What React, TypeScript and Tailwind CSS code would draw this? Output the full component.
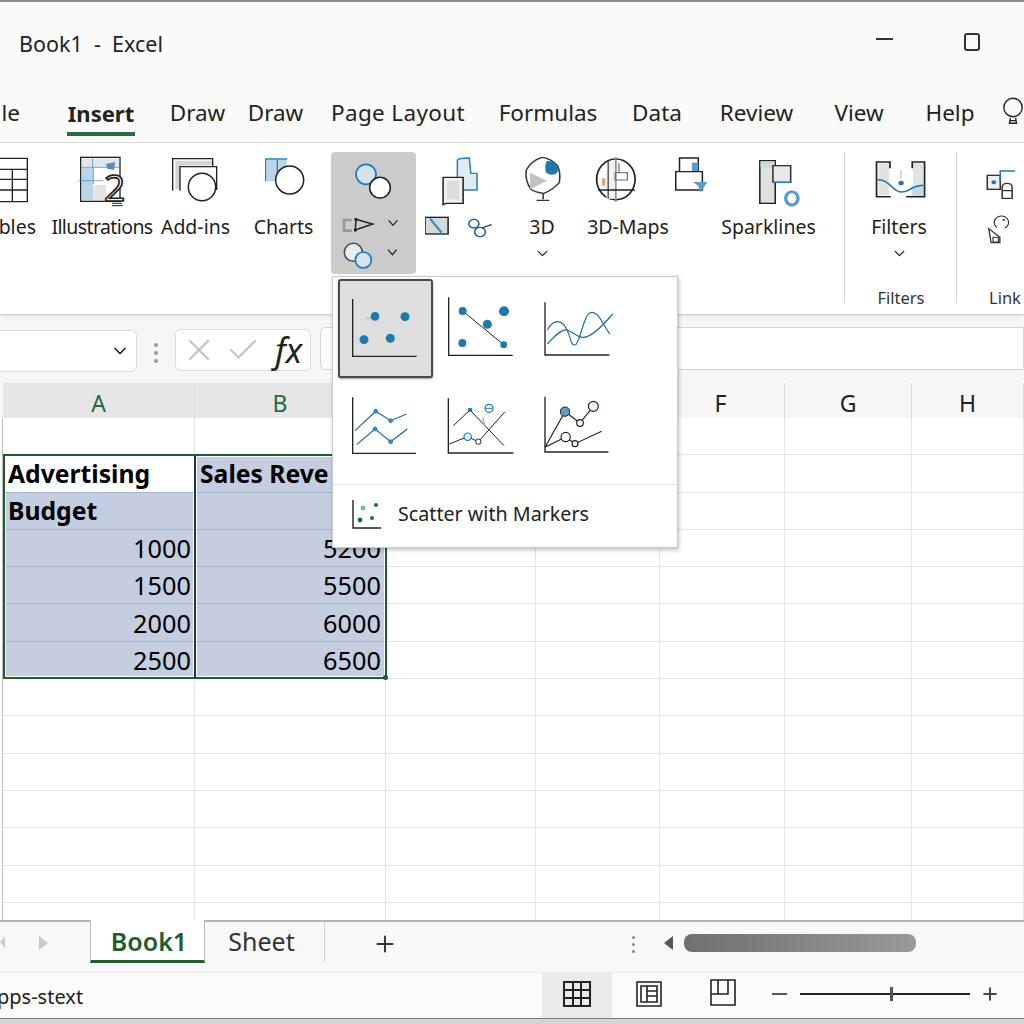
import { ChevronDown, Plus, X, Check } from 'lucide-react';

const tabs = [
  { label: 'Draw', cls: 'ml-[35px] w-[55px]' },
  { label: 'Draw', cls: 'ml-[23px] w-[55px]' },
  { label: 'Page Layout', cls: 'ml-[28px] w-[134px] tracking-[0.35px]' },
  { label: 'Formulas', cls: 'ml-[34px] w-[98px]' },
  { label: 'Data', cls: 'ml-[35px] w-[50px]' },
  { label: 'Review', cls: 'ml-[37px] w-[75px]' },
  { label: 'View', cls: 'ml-[39px] w-[52px]' },
  { label: 'Help', cls: 'ml-[40px] w-[50px]' },
];

const colLetters = [
  { letter: 'A', cls: 'bg-[#e6e6e6] text-[#1e6b3a] border-b-2 border-[#1d5c2f]' },
  { letter: 'B', cls: 'bg-[#e6e6e6] text-[#1e6b3a] border-b-2 border-[#1d5c2f] pr-[20px]' },
  { letter: 'C', cls: 'text-[#333] border-b-2 border-[#b5b5b5]' },
  { letter: 'D', cls: 'text-[#333] border-b-2 border-[#b5b5b5]' },
  { letter: 'F', cls: 'text-[#222] border-b-2 border-[#b5b5b5] pr-[3px]' },
  { letter: 'G', cls: 'text-[#222] border-b-2 border-[#b5b5b5]' },
  { letter: 'H', cls: 'text-[#222] border-b-2 border-[#b5b5b5]' },
];

const dataRows = [
  { a: '', b: '', top: true },
  { a: 'Advertising', b: 'Sales Reve', bold: true, plainA: true },
  { a: 'Budget', b: '', bold: true },
  { a: '1000', b: '5200' },
  { a: '1500', b: '5500' },
  { a: '2000', b: '6000' },
  { a: '2500', b: '6500' },
];

const ink = '#222';
const blue = '#1f77ad';

function TablesIcon() {
  return (
    <svg width="44" height="60" viewBox="0 36 132 180" fill="none" stroke={ink} strokeWidth="4">
      <path d="M-5 55H82V185H-5M-5 88H82M-5 118H82M-5 150H82M37 88V185" />
    </svg>
  );
}

function IllustrationsIcon() {
  return (
    <svg width="116" height="60" viewBox="132 36 348 180" fill="none">
      <rect x="246" y="84" width="34" height="96" fill="#b9d5e6" />
      <rect x="246" y="56" width="110" height="26" fill="#dfe5ea" />
      <rect x="282" y="135" width="36" height="45" fill="#e4e4e4" />
      <rect x="242" y="52" width="118" height="132" stroke={ink} strokeWidth="4" />
      <path d="M278 52V82M242 82H360M236 122H310M280 82V132" stroke="#3b84b5" strokeWidth="2" />
      <path d="M318 72L345 66L342 90L322 86Z" fill="#5b8fb5" />
      <text x="312" y="184" fontSize="112" fontFamily="Open Sans" fill="#fff" stroke={ink} strokeWidth="5">2</text>
      <path d="M336 190H366M336 197H368" stroke="#33556b" strokeWidth="4" />
    </svg>
  );
}

function AddinsIcon() {
  return (
    <svg width="71" height="60" viewBox="480 36 213 180" fill="none">
      <path d="M526 62H636V76H540V148H526Z" fill="#d5d5d5" />
      <path d="M518 152V56H638V80" stroke={ink} strokeWidth="4" />
      <path d="M540 152V80H650V150" stroke={ink} strokeWidth="4" />
      <circle cx="606" cy="141" r="41" fill="#fff" stroke={ink} strokeWidth="4.5" />
    </svg>
  );
}

function ChartsIcon() {
  return (
    <svg width="67" height="60" viewBox="750 36 201 180" fill="none">
      <path d="M800 60H860V100L830 124H800Z" fill="#b9d5e6" />
      <path d="M797 124V57H862M832 60V110" stroke="#2a80b9" strokeWidth="4" />
      <circle cx="869" cy="120" r="42" fill="#fff" stroke={ink} strokeWidth="4.5" />
    </svg>
  );
}

function ShapesIcon() {
  return (
    <svg width="85" height="122" viewBox="993 36 255 366" fill="none">
      <circle cx="1098" cy="103" r="30" fill="#d6e2ec" stroke="#1a78c2" strokeWidth="5" />
      <circle cx="1140" cy="143" r="31" fill="#fff" stroke={ink} strokeWidth="4.5" />
      <path d="M1056 240H1032V272H1056" stroke="#999" strokeWidth="8" />
      <path d="M1068 238L1118 252L1066 270Z" stroke={ink} strokeWidth="4.5" />
      <circle cx="1068" cy="238" r="5" fill={ink} />
      <circle cx="1066" cy="270" r="5" fill={ink} />
      <path d="M1166 241L1179 256L1192 241" stroke={ink} strokeWidth="4" />
      <circle cx="1060" cy="337" r="27" fill="#e6ecf1" stroke="#3c4a55" strokeWidth="4.5" />
      <circle cx="1090" cy="360" r="24" fill="#d6e2ec" stroke="#1a78c2" strokeWidth="5" />
      <path d="M1164 329L1177 344L1190 329" stroke={ink} strokeWidth="4" />
    </svg>
  );
}

function ModelsIcon() {
  return (
    <svg width="67" height="122" viewBox="13 36 174 366" preserveAspectRatio="none" fill="none">
      <path d="M97 112V62Q97 54 128 54L132 100H148V150H100Z" fill="#e2ebf1" stroke="#2a80b9" strokeWidth="4" />
      <path d="M60 112H112V190H68L60 194Z" fill="#f1f1f1" stroke={ink} strokeWidth="4" />
      <rect x="70" y="122" width="32" height="56" fill="#dcdcdc" />
      <rect x="13" y="232" width="60" height="50" fill="#d3dade" stroke={ink} strokeWidth="4" />
      <path d="M26 236L56 278" stroke="#3f8dc0" strokeWidth="6" />
      <circle cx="140" cy="251" r="13" stroke="#1f5f8b" strokeWidth="4" />
      <circle cx="156" cy="276" r="14" stroke="#1f5f8b" strokeWidth="4" />
      <path d="M160 264L186 254" stroke="#333" strokeWidth="4" />
    </svg>
  );
}

function ThreeDIcon() {
  return (
    <svg width="60" height="60" viewBox="239 36 156 180" preserveAspectRatio="none" fill="none">
      <path d="M316 52Q340 54 358 78Q366 100 362 128Q345 150 322 160Q300 158 288 148Q272 120 276 90Q290 62 316 52Z" fill="#fff" stroke="#333" strokeWidth="4" strokeLinejoin="round" />
      <path d="M330 62Q350 62 360 84Q360 96 352 102Q338 108 328 98Q322 78 330 62Z" fill={blue} />
      <path d="M286 98L330 122L286 148Z" fill="#c2c2c2" />
      <path d="M320 162V178M303 181H336" stroke="#333" strokeWidth="4" />
    </svg>
  );
}

function MapsIcon() {
  return (
    <svg width="82" height="60" viewBox="433 36 213 180" preserveAspectRatio="none" fill="none">
      <ellipse cx="508" cy="118" rx="50" ry="61" fill="#fff" stroke={ink} strokeWidth="4.5" />
      <path d="M480 118Q484 70 508 58V176H484Z" fill="#f0f0f0" />
      <path d="M508 52V186" stroke="#888" strokeWidth="4" />
      <path d="M488 60V175" stroke="#333" strokeWidth="3" />
      <rect x="506" y="98" width="32" height="22" stroke="#666" strokeWidth="3" />
      <path d="M516 70V98" stroke="#666" strokeWidth="3" />
      <path d="M462 150H557" stroke={ink} strokeWidth="4" />
      <rect x="472" y="115" width="8" height="22" fill="#e9a07a" />
    </svg>
  );
}

function TourIcon() {
  return (
    <svg width="33" height="60" viewBox="660 36 88 180" preserveAspectRatio="none" fill="none">
      <path d="M672 95V54H722V95" stroke={ink} strokeWidth="4" />
      <rect x="705" y="68" width="17" height="27" fill="#5b9bc9" />
      <path d="M662 95H733V150H662Z" fill="#fff" stroke={ink} strokeWidth="4" />
      <path d="M708 126H746L728 158L722 138Z" fill="#5b9bc9" />
    </svg>
  );
}

function SparklinesIcon() {
  return (
    <svg width="93" height="60" viewBox="784 36 241 180" preserveAspectRatio="none" fill="none">
      <rect x="882" y="62" width="40" height="128" fill="#e0e0e0" stroke={ink} strokeWidth="4" />
      <path d="M884 64H920V82H884Z" fill="#c6d9e6" />
      <rect x="916" y="77" width="46" height="50" fill="#e8e8e8" stroke="#333" strokeWidth="4" />
      <path d="M916 127H962" stroke="#2a80b9" strokeWidth="4" />
      <ellipse cx="965" cy="175" rx="16" ry="20" fill="#fff" stroke="#5b9bc9" strokeWidth="9" />
    </svg>
  );
}

function FiltersIcon() {
  return (
    <svg width="58" height="60" viewBox="1168 36 151 180" preserveAspectRatio="none" fill="none">
      <rect x="1190" y="70" width="28" height="96" fill="#e2e2e2" />
      <rect x="1280" y="70" width="26" height="70" fill="#e2e2e2" />
      <rect x="1278" y="138" width="28" height="30" fill="#c3d9e8" />
      <path d="M1220 85V66H1185V170H1222M1278 85V66H1310V170H1262" stroke={ink} strokeWidth="4.5" />
      <path d="M1185 120C1220 115 1225 156 1250 156S1270 136 1312 136" stroke={blue} strokeWidth="4.5" />
      <circle cx="1249" cy="129" r="7" fill={blue} />
      <path d="M1249 90V116" stroke="#bbb" strokeWidth="3" />
    </svg>
  );
}

function LinkIcon() {
  return (
    <svg width="67" height="122" viewBox="1393 36 175 366" preserveAspectRatio="none" fill="none">
      <rect x="1472" y="106" width="34" height="42" fill="#eee" stroke="#333" strokeWidth="4" />
      <circle cx="1489" cy="127" r="6" fill={blue} />
      <path d="M1506 125V93H1545" stroke={blue} strokeWidth="4" />
      <path d="M1511 175V142Q1511 130 1524 130Q1537 130 1537 142V175ZM1511 152H1537" fill="#fff" stroke="#333" strokeWidth="4" />
      <path d="M1497 262A19 19 0 1 1 1518 264" stroke="#333" strokeWidth="3" />
      <circle cx="1515" cy="240" r="3" fill="#333" />
      <path d="M1476 266L1505 292V308H1482Z" fill="#fff" stroke="#333" strokeWidth="3.5" />
      <rect x="1487" y="292" width="14" height="14" stroke="#333" strokeWidth="3" />
    </svg>
  );
}

function Axis({ d }: { d: string }) {
  return <path d={d} stroke="#222" strokeWidth="4" fill="none" />;
}

function ScatterThumb({ kind }: { kind: number }) {
  return (
    <svg width="96" height="99" viewBox="0 0 288 297" fill="none" className="shrink-0">
      {kind === 0 && (
        <>
          <Axis d="M44 60V232H236" />
          <path d="M84 118H108" stroke="#999" strokeWidth="2" />
          <circle cx="111" cy="112" r="13" fill={blue} />
          <circle cx="201" cy="113" r="13.5" fill={blue} />
          <circle cx="78" cy="182" r="13.5" fill={blue} />
          <circle cx="157" cy="178" r="13.5" fill={blue} />
        </>
      )}
      {kind === 1 && (
        <>
          <Axis d="M44 55V229H236" />
          <path d="M86 96L209 197" stroke="#222" strokeWidth="3" />
          <circle cx="86" cy="96" r="12" fill={blue} />
          <circle cx="210" cy="97" r="15" fill={blue} />
          <circle cx="160" cy="136" r="13.5" fill={blue} />
          <circle cx="85" cy="192" r="12" fill={blue} />
          <circle cx="209" cy="197" r="10" fill={blue} />
        </>
      )}
      {kind === 2 && (
        <>
          <Axis d="M45 70V228H238" />
          <path d="M52 153C70 120 95 120 110 150S120 198 135 198S160 100 185 100S225 150 240 165" stroke="#1c6a9c" strokeWidth="3.5" />
          <path d="M52 195C75 170 95 150 110 153S140 175 160 175S210 150 248 105" stroke="#1c6a9c" strokeWidth="3.5" />
        </>
      )}
      {kind === 3 && (
        <>
          <Axis d="M44 58V226H234" />
          <path d="M51 158L113 100L158 128L206 108M56 200L111 153L158 191L208 153" stroke="#1c6a9c" strokeWidth="3.5" />
          {[[113, 100], [158, 128], [111, 153], [158, 191]].map(([x, y]) => (
            <circle key={`${x}-${y}`} cx={x} cy={y} r="6" fill="#3f8dc0" stroke="#1c6a9c" strokeWidth="2" />
          ))}
        </>
      )}
      {kind === 4 && (
        <>
          <Axis d="M43 61V225H238" />
          <path d="M58 143L108 96L210 203M46 198L101 176L133 191L213 101" stroke="#222" strokeWidth="3" />
          <circle cx="108" cy="96" r="7" fill={blue} />
          <circle cx="165" cy="91" r="12" fill="#fff" stroke={blue} strokeWidth="3.5" />
          <path d="M154 91H176" stroke={blue} strokeWidth="3" />
          <path d="M146 120L152 142" stroke="#9cc3dc" strokeWidth="6" />
          <circle cx="101" cy="176" r="11" fill="#e3eef5" stroke={blue} strokeWidth="3.5" />
          <circle cx="133" cy="191" r="8" fill="#fff" stroke="#222" strokeWidth="3" />
        </>
      )}
      {kind === 5 && (
        <>
          <Axis d="M45 56V222H235" />
          <path d="M45 208L105 101L150 135L190 85M45 208L107 177L135 197L215 160" stroke="#222" strokeWidth="3.5" />
          <circle cx="105" cy="101" r="14" fill="#5f9fc7" stroke="#222" strokeWidth="3" />
          <circle cx="150" cy="135" r="10" fill="#fff" stroke="#222" strokeWidth="3.5" />
          <circle cx="190" cy="85" r="15" fill="#eef3f6" stroke="#222" strokeWidth="3.5" />
          <circle cx="107" cy="177" r="14" fill="#fff" stroke="#222" strokeWidth="3.5" />
          <circle cx="135" cy="197" r="9" fill="#fff" stroke="#222" strokeWidth="3.5" />
        </>
      )}
    </svg>
  );
}

function ChartPopup() {
  return (
    <div className="absolute z-20 left-[332px] top-[276px] w-[346px] h-[272px] bg-white border border-[#c8c8c8] shadow-[1px_2px_4px_rgba(0,0,0,0.25)] flex flex-col">
      <div className="grid grid-cols-[96px_96px_96px] auto-rows-[99px] pl-[5px] pt-[2px]">
        {[0, 1, 2, 3, 4, 5].map((k) => (
          <div key={k} className={k === 0 ? 'w-[95px] bg-[#dedede] border-2 border-[#4a4a4a] rounded-[3px] shadow-[0_1px_2px_rgba(0,0,0,0.4)] overflow-hidden [&>svg]:-m-[2px]' : ''}>
            <ScatterThumb kind={k} />
          </div>
        ))}
      </div>
      <div className="mt-[7px] border-t border-[#e4e4e4] flex items-center h-[62px] pb-[4px]">
        <svg width="32" height="32" viewBox="0 0 32 32" fill="none" className="ml-[18px]">
          <path d="M2 2V30H30" stroke="#222" strokeWidth="1.4" />
          <circle cx="12" cy="10" r="2.4" fill="#79aed2" />
          <circle cx="25" cy="7" r="2" fill="#1c5f94" />
          <circle cx="9" cy="22" r="2.4" fill="#1c5f94" />
          <circle cx="21" cy="20" r="2" fill="#1c5f94" />
        </svg>
        <span className="ml-[15px] text-[19.7px] text-[#222] whitespace-nowrap">Scatter with Markers</span>
      </div>
    </div>
  );
}

function RibbonCol({ cls, icon, label, labelCls, chevron }: { cls: string; icon: React.ReactNode; label?: string; labelCls?: string; chevron?: boolean }) {
  return (
    <div className={`flex flex-col items-center shrink-0 ${cls}`}>
      {icon}
      {label && <span className={`text-[19.5px] leading-[30px] text-[#222] whitespace-nowrap ${labelCls ?? ''}`}>{label}</span>}
      {chevron && <ChevronDown size={17} strokeWidth={1.8} className="text-[#222] mt-[3px]" />}
    </div>
  );
}

function Ribbon() {
  return (
    <div className="relative z-10 h-[172px] bg-white border-b border-[#cfcfcf] shadow-[0_1px_3px_rgba(0,0,0,0.12)] flex items-start pt-[9px] pb-[5px] overflow-hidden shrink-0">
      <div className="w-[44px] shrink-0 flex flex-col items-end">
        <TablesIcon />
        <span className="text-[19.5px] leading-[30px] text-[#222] pr-[8px]">bles</span>
      </div>
      <RibbonCol cls="w-[116px]" icon={<IllustrationsIcon />} label="Illustrations" labelCls="tracking-[-0.6px]" />
      <RibbonCol cls="w-[71px]" icon={<AddinsIcon />} label="Add-ins" />
      <RibbonCol cls="ml-[19px] w-[67px]" icon={<ChartsIcon />} label="Charts" />
      <div className="ml-[14px] w-[85px] h-[122px] shrink-0 bg-[#cbcbcb] rounded-[4px]">
        <ShapesIcon />
      </div>
      <div className="ml-[9px] w-[67px] shrink-0">
        <ModelsIcon />
      </div>
      <RibbonCol cls="ml-[20px] w-[60px]" icon={<ThreeDIcon />} label="3D" chevron />
      <RibbonCol cls="ml-[15px] w-[82px]" icon={<MapsIcon />} label="3D-Maps" />
      <RibbonCol cls="ml-[6px] w-[33px]" icon={<TourIcon />} />
      <RibbonCol cls="ml-[14px] w-[93px]" icon={<SparklinesIcon />} label="Sparklines" />
      <div className="ml-[29px] w-px h-[151px] bg-[#d9d9d9] shrink-0" />
      <div className="ml-[25px] w-[58px] h-[158px] shrink-0 flex flex-col items-center">
        <FiltersIcon />
        <span className="text-[19.5px] leading-[30px] text-[#222]">Filters</span>
        <ChevronDown size={17} strokeWidth={1.8} className="text-[#222] mt-[3px]" />
        <span className="mt-auto text-[16.5px] leading-[24px] text-[#333] ml-[4px]">Filters</span>
      </div>
      <div className="ml-[28px] w-px h-[151px] bg-[#d9d9d9] shrink-0" />
      <div className="w-[67px] h-[158px] shrink-0 flex flex-col">
        <LinkIcon />
        <span className="mt-auto ml-[32px] text-[16.5px] leading-[24px] text-[#333]">Link</span>
      </div>
    </div>
  );
}

function FormulaBar() {
  return (
    <div className="h-[68px] bg-[#f6f6f6] flex items-start shrink-0 relative">
      <div className="mt-[15px] w-[138px] h-[42px] -ml-[1px] bg-white border border-[#dcdcdc] rounded-r-[6px] flex items-center justify-end pr-[6px]">
        <ChevronDown size={20} strokeWidth={2} className="text-[#222]" />
      </div>
      <div className="mt-[28px] ml-[17px] flex flex-col gap-[4px]">
        <div className="w-[4px] h-[4px] rounded-full bg-[#999]" />
        <div className="w-[4px] h-[4px] rounded-full bg-[#999]" />
        <div className="w-[4px] h-[4px] rounded-full bg-[#999]" />
      </div>
      <div className="mt-[14px] ml-[17px] w-[136px] h-[42px] bg-white border border-[#dcdcdc] rounded-[6px] flex items-center pl-[5px]">
        <X size={36} strokeWidth={1.6} className="text-[#c4c4c4]" />
        <Check size={36} strokeWidth={1.6} className="text-[#c8c8c8] ml-[8px]" />
        <span className="ml-[14px] text-[34px] leading-none italic text-[#222] [font-family:'Liberation_Serif',serif]">fx</span>
      </div>
      <div className="mt-[12px] ml-[9px] flex-1 h-[43px] bg-white border border-[#d6d6d6] rounded-l-[6px]" />
    </div>
  );
}

function Sheet() {
  return (
    <div className="relative flex-1 bg-white overflow-hidden">
      <div className="grid grid-cols-[3px_192px_191px_150px_124px_125px_127px_112px] auto-rows-[37.3px]">
        {dataRows.map((row, i) => (
          <div key={i} className="contents">
            <div className="border-r border-[#bdbdbd]" />
            <div className={`border-r border-b flex items-center overflow-hidden text-black ${i === 0 ? 'border-[#e4e4e4]' : 'border-[#a9b1c4]'} ${row.top || row.plainA ? 'bg-white' : 'bg-[#c5cde0]'} ${row.bold ? 'font-bold pl-[5px] text-[24.7px]' : 'justify-end pr-[3px] pt-[2px] text-[25.3px]'}`}>
              {row.a}
            </div>
            <div className={`border-r border-b flex items-center overflow-hidden whitespace-nowrap text-black ${i === 0 ? 'border-[#e4e4e4] bg-white' : 'border-[#a9b1c4] bg-[#c5cde0]'} ${row.bold ? 'font-bold pl-[5px] text-[24.7px]' : 'justify-end pr-[4px] pt-[2px] text-[25.3px]'}`}>
              {row.b}
            </div>
            {[0, 1, 2, 3, 4].map((c) => (
              <div key={c} className="border-r border-b border-[#e4e4e4]" />
            ))}
          </div>
        ))}
        {Array.from({ length: 7 }).map((_, i) => (
          <div key={i} className="contents">
            <div className="border-r border-[#bdbdbd]" />
            {[0, 1, 2, 3, 4, 5, 6].map((c) => (
              <div key={c} className="border-r border-b border-[#e4e4e4]" />
            ))}
          </div>
        ))}
      </div>
      {/* selection outline sits on top of the cells */}
      <div className="absolute left-[3px] top-[36px] w-[384px] h-[225px] border-2 border-[#1e5c2e] shadow-[inset_0_0_0_1px_#fff]">
        <div className="absolute left-[188px] top-0 bottom-0 w-[4px] bg-[#22304a] border-x border-white" />
        <div className="absolute -right-[3px] -bottom-[3px] w-[5px] h-[5px] rounded-full bg-[#1e5c2e]" />
      </div>
    </div>
  );
}

function SheetTabs() {
  return (
    <div className="h-[52px] bg-[#f8f8f8] border-t-2 border-[#b4b4b4] flex items-start shrink-0 relative">
      <div className="w-0 h-0 mt-[14px] border-y-[6px] border-y-transparent border-r-[5px] border-r-[#ccc]" />
      <div className="w-0 h-0 ml-[34px] mt-[14px] border-y-[7px] border-y-transparent border-l-[9px] border-l-[#c8c8c8]" />
      <div className="ml-[42px] -mt-[2px] w-[115px] h-[43px] pt-[3px] bg-white border-x border-[#bbb] border-b-[3px] border-b-[#1e5c2e] flex items-center justify-center text-[25px] font-semibold text-[#1e5c2e]">
        <span className="ml-[3px]">Book1</span>
      </div>
      <div className="w-[120px] h-[40px] pr-[6px] border-r border-[#d0d0d0] flex items-center justify-center text-[25px] text-[#333]">
        Sheet
      </div>
      <Plus size={26} strokeWidth={1.8} className="ml-[47px] mt-[9px] text-[#333]" />
      <div className="ml-[234px] mt-[14px] flex flex-col gap-[4px]">
        <div className="w-[3px] h-[3px] rounded-full bg-[#888]" />
        <div className="w-[3px] h-[3px] rounded-full bg-[#888]" />
        <div className="w-[3px] h-[3px] rounded-full bg-[#888]" />
      </div>
      <div className="ml-[29px] mt-[14px] w-0 h-0 border-y-[7px] border-y-transparent border-r-[9px] border-r-[#555]" />
      <div className="ml-[11px] mt-[12px] w-[232px] h-[18px] rounded-[8px] bg-gradient-to-r from-[#707070] to-[#999]" />
    </div>
  );
}

function StatusBar() {
  return (
    <div className="h-[46px] bg-[#fbfbfb] border-t border-[#eaeaea] flex items-stretch shrink-0 overflow-hidden">
      <span className="-ml-[3px] w-[88px] self-center mt-[3px] text-[20px] text-[#222] whitespace-nowrap">pps-stext</span>
      <div className="ml-[457px] w-[70px] pb-[4px] bg-[#ebebeb] flex items-center justify-center">
        <svg width="28" height="26" viewBox="0 0 28 26" fill="none" stroke="#222" strokeWidth="2">
          <path d="M1 1H27V25H1ZM1 9H27M1 17H27M10 1V25M18 1V25" />
        </svg>
      </div>
      <div className="ml-[24px] pb-[4px] flex items-center">
        <svg width="26" height="26" viewBox="0 0 26 26" fill="none" stroke="#222" strokeWidth="1.6">
          <path d="M1 1H25V25H1ZM5 5H21V21H5ZM11 5V21M11 10H21M11 15H21" />
        </svg>
      </div>
      <div className="ml-[48px] pb-[6px] flex items-center">
        <svg width="26" height="27" viewBox="0 0 26 27" fill="none" stroke="#222" strokeWidth="1.6">
          <path d="M1 1H25V26H1ZM8 1V15H1M8 15H18V1" />
        </svg>
      </div>
      <div className="ml-[36px] pb-[4px] flex items-center gap-[13px]">
        <div className="w-[15px] h-[2px] bg-[#555]" />
        <div className="relative w-[170px] h-[2px] bg-[#222]">
          <div className="absolute left-[90px] -top-[6px] w-[3px] h-[14px] bg-[#555]" />
        </div>
        <Plus size={20} strokeWidth={2.4} className="text-[#444] -ml-[3px]" />
      </div>
    </div>
  );
}

export default function App() {
  return (
    <div className="relative w-[1024px] h-[1024px] overflow-hidden flex flex-col bg-white font-['Noto_Sans',sans-serif]">
      <div className="h-[90px] bg-[#fafafa] border-t-2 border-[#8a8a8a] flex items-center shrink-0 pb-[4px]">
        <span className="ml-[19px] text-[21.5px] text-[#222] whitespace-pre">Book1  -  Excel</span>
        <div className="ml-auto w-[17px] h-[2px] bg-[#333] mb-[10px]" />
        <div className="ml-[71px] mr-[44px] w-[16px] h-[18px] border-2 border-[#333] rounded-[3px] mb-[4px]" />
      </div>
      <div className="h-[53px] bg-[#fafafa] border-b border-[#e2e2e2] flex items-start shrink-0 text-[22.5px] text-[#222] overflow-hidden">
        <span className="w-[20px] h-[46px] flex items-center justify-end">le</span>
        <div className="ml-[47px] w-[68px] h-[46px] pt-[4px] border-b-[4px] border-[#2f6b3f] flex items-center justify-center font-bold text-[22px]">Insert</div>
        {tabs.map((t, i) => (
          <span key={i} className={`h-[46px] flex items-center justify-center whitespace-nowrap ${t.cls}`}>{t.label}</span>
        ))}
        <svg width="22" height="28" viewBox="0 0 24 32" fill="none" stroke="#222" strokeWidth="1.6" className="ml-[27px] mt-[7px] shrink-0">
          <circle cx="12" cy="12" r="10.5" />
          <path d="M9 24L8 30H16L15 24M8 27H16" />
        </svg>
      </div>
      <Ribbon />
      <FormulaBar />
      <div className="h-[35px] bg-[#f6f6f6] grid grid-cols-[3px_192px_191px_150px_124px_125px_127px_112px] shrink-0">
        <div />
        {colLetters.map((c) => (
          <div key={c.letter} className={`flex items-center justify-center pt-[3px] text-[23px] border-r border-r-[#dcdcdc] ${c.cls}`}>
            {c.letter}
          </div>
        ))}
      </div>
      <Sheet />
      <SheetTabs />
      <StatusBar />
      <div className="h-[6px] bg-[#d4d4d4] border-t border-[#777] shrink-0" />
      <ChartPopup />
    </div>
  );
}
